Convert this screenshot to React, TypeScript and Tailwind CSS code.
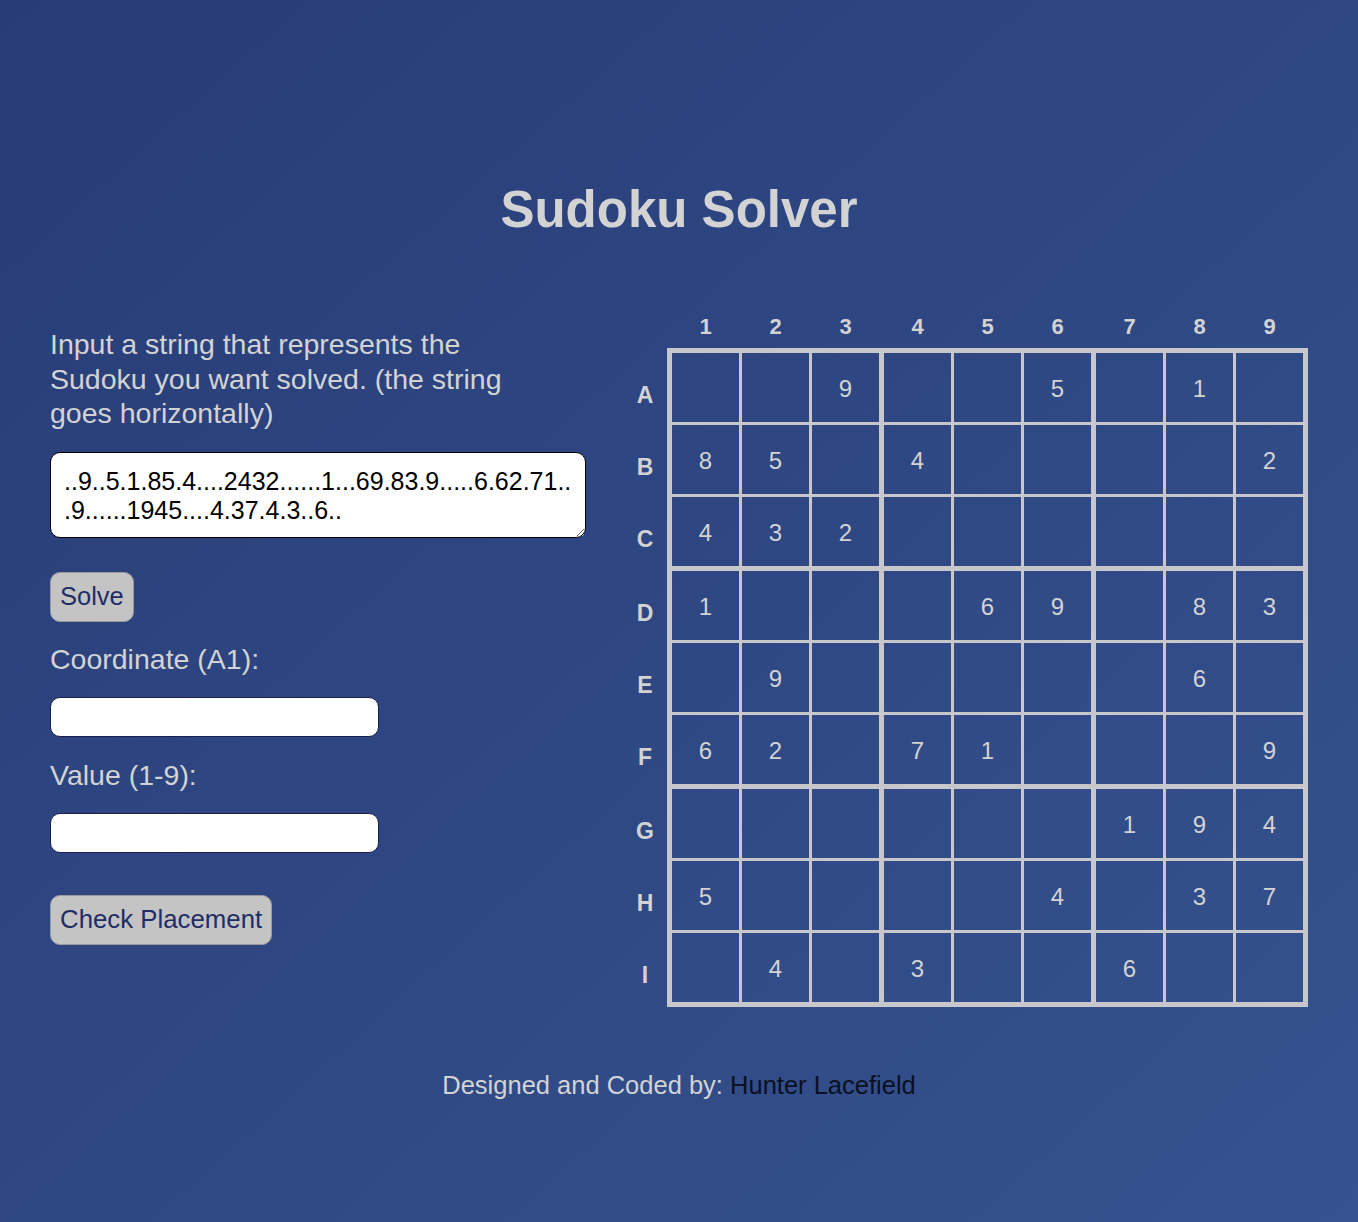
const puzzle =
  '..9..5.1.85.4....2432......1...69.83.9.....6.62.71...9......1945....4.37.4.3..6..';

const rows = ['A', 'B', 'C', 'D', 'E', 'F', 'G', 'H', 'I'];
const cols = ['1', '2', '3', '4', '5', '6', '7', '8', '9'];

const Board = () => {
  const cellAt = (r: number, c: number) => {
    const ch = puzzle[r * 9 + c];
    return ch === '.' ? '' : ch;
  };

  return (
    <div className="grid grid-cols-3 gap-[5px] bg-[#c8c8cc] p-[5px]">
      {[0, 1, 2].map((br) =>
        [0, 1, 2].map((bc) => (
          <div key={`${br}-${bc}`} className="grid grid-cols-3 gap-[3px]">
            {[0, 1, 2].map((r) =>
              [0, 1, 2].map((c) => (
                <div
                  key={`${r}-${c}`}
                  className="flex h-[69px] w-[67px] items-center justify-center bg-linear-to-br from-[#283c77] to-[#35538f] bg-fixed pt-[2px] text-[24px] text-[#d3d3d3]"
                >
                  {cellAt(br * 3 + r, bc * 3 + c)}
                </div>
              ))
            )}
          </div>
        ))
      )}
    </div>
  );
};

export default function App() {
  return (
    <div
      className="min-h-screen w-full bg-linear-to-br from-[#283c77] to-[#35538f] text-[#d3d3d3]"
      style={{ fontFamily: '"Liberation Sans", Arial, sans-serif' }}
    >
      <h1 className="pt-[182px] text-center text-[51px] font-bold leading-[56px]">Sudoku Solver</h1>

      <div className="mt-[73px] flex justify-between px-[50px]">
        {/* controls */}
        <div className="flex w-[536px] flex-col items-start pt-[16px]">
          <p className="w-[460px] text-[28.5px] leading-[34.5px]">
            Input a string that represents the Sudoku you want solved. (the string goes horizontally)
          </p>
          <textarea
            defaultValue={puzzle}
            className="mt-[21px] h-[86px] w-[536px] rounded-[10px] border border-black bg-white pt-[14px] pr-[10px] pl-[13px] text-[25px] leading-[29px] text-black outline-none"
            style={{ fontFamily: '"Liberation Sans", Arial, sans-serif' }}
          />
          <button className="mt-[34px] h-[50px] rounded-[10px] border border-[#9a9a9a] bg-[#c4c4c4] px-[9px] text-[25.5px] text-[#1f2d66]">
            Solve
          </button>
          <label className="mt-[20px] text-[28.5px] leading-[34px]">Coordinate (A1):</label>
          <input className="mt-[21px] h-[40px] w-[329px] rounded-[10px] border border-[#1a1f4a] bg-white px-3 text-black outline-none" />
          <label className="mt-[21px] text-[28.5px] leading-[34px]">Value (1-9):</label>
          <input className="mt-[21px] h-[40px] w-[329px] rounded-[10px] border border-[#1a1f4a] bg-white px-3 text-black outline-none" />
          <button className="mt-[42px] h-[50px] rounded-[10px] border border-[#9a9a9a] bg-[#c4c4c4] px-[9px] text-[25.8px] text-[#1f2d66]">
            Check Placement
          </button>
        </div>

        {/* board */}
        <div className="flex flex-col">
          <div className="flex">
            <div className="w-[34px]" />
            <div className="grid grid-cols-3 gap-[5px] px-[5px]">
              {[0, 1, 2].map((b) => (
                <div key={b} className="grid grid-cols-3 gap-[3px]">
                  {cols.slice(b * 3, b * 3 + 3).map((c) => (
                    <div key={c} className="flex h-[28px] w-[67px] items-center justify-center pt-[2px] text-[22px] font-bold">
                      {c}
                    </div>
                  ))}
                </div>
              ))}
            </div>
          </div>
          <div className="mt-[9px] flex">
            <div className="mr-[10px] flex w-[24px] flex-col gap-[5px] py-[5px]">
              {[0, 1, 2].map((b) => (
                <div key={b} className="flex flex-col gap-[3px]">
                  {rows.slice(b * 3, b * 3 + 3).map((r) => (
                    <div key={r} className="flex h-[69px] items-center justify-center pt-[15px] text-[23px] font-bold">
                      {r}
                    </div>
                  ))}
                </div>
              ))}
            </div>
            <Board />
          </div>
        </div>
      </div>

      <p className="mt-[64px] text-center text-[25.5px] leading-[28px]">
        Designed and Coded by: <span className="text-[#0b1022]">Hunter Lacefield</span>
      </p>
    </div>
  );
}
